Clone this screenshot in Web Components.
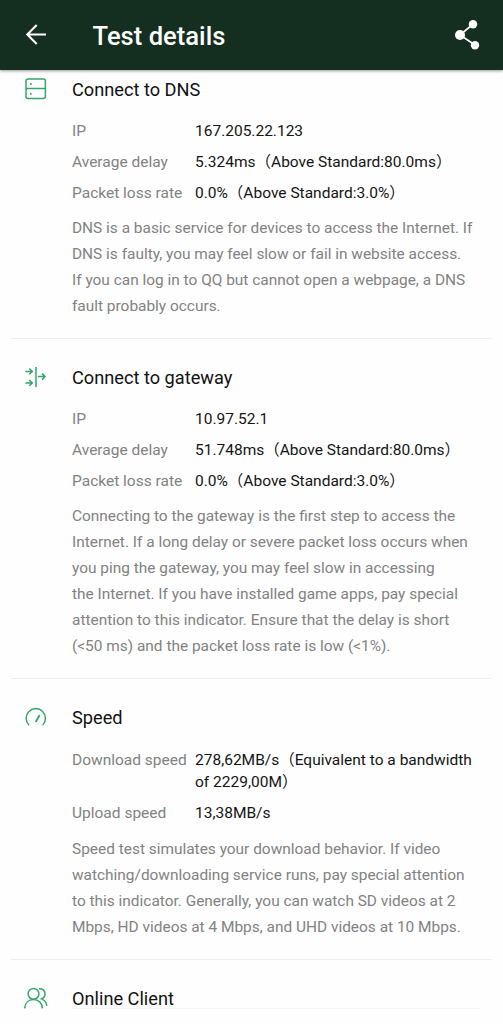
<!DOCTYPE html>
<html lang="en">
<head>
<meta charset="utf-8">
<title>Test details</title>
<style>
html,body{margin:0;height:100%;overflow:hidden;background:#fefefe}
body{font-family:Roboto,"Noto Sans CJK SC",sans-serif}
</style>
</head>
<body>
<test-page>
  <app-header slot="header">Test details</app-header>
  <detail-section icon="dns" heading="Connect to DNS" style="--top:9px">
    <detail-row slot="rows" label="IP">167.205.22.123</detail-row>
    <detail-row slot="rows" label="Average delay">5.324ms（Above Standard:80.0ms）</detail-row>
    <detail-row slot="rows" label="Packet loss rate">0.0%（Above Standard:3.0%）</detail-row>
    DNS is a basic service for devices to access the Internet. If<br>DNS is faulty, you may feel slow or fail in website access.<br>If you can log in to QQ but cannot open a webpage, a DNS<br>fault probably occurs.
  </detail-section>
  <detail-section icon="gateway" heading="Connect to gateway">
    <detail-row slot="rows" label="IP">10.97.52.1</detail-row>
    <detail-row slot="rows" label="Average delay">51.748ms（Above Standard:80.0ms）</detail-row>
    <detail-row slot="rows" label="Packet loss rate">0.0%（Above Standard:3.0%）</detail-row>
    Connecting to the gateway is the first step to access the<br>Internet. If a long delay or severe packet loss occurs when<br>you ping the gateway, you may feel slow in accessing<br>the Internet. If you have installed game apps, pay special<br>attention to this indicator. Ensure that the delay is short<br>(&lt;50 ms) and the packet loss rate is low (&lt;1%).
  </detail-section>
  <detail-section icon="speed" heading="Speed" style="--rows:20px;--note:12px">
    <detail-row slot="rows" label="Download speed">278,62MB/s（Equivalent to a bandwidth<br>of 2229,00M）</detail-row>
    <detail-row slot="rows" label="Upload speed">13,38MB/s</detail-row>
    Speed test simulates your download behavior. If video<br>watching/downloading service runs, pay special attention<br>to this indicator. Generally, you can watch SD videos at 2<br>Mbps, HD videos at 4 Mbps, and UHD videos at 10 Mbps.
  </detail-section>
  <detail-section icon="clients" heading="Online Client" last></detail-section>
</test-page>
<script>
const ICONS = {
  dns: '<rect x="2" y="2" width="19.4" height="19.4" rx="2"/><path d="M2 11.5h19.4"/><path d="M5.9 6.8h1.8M5.9 16.9h1.8" stroke-width="1.8"/>',
  gateway: '<path d="M12 2v20M1.4 6.4h7M5.3 3.5l3 2.9-3 2.9M1.4 17.9h7M5.3 15l3 2.9-3 2.9M14 11.6h7M18 8.6l3 3-3 3"/>',
  speed: '<path d="M5 20.2A9.7 9.7 0 1 1 18.6 20.2"/><path d="M15.7 10l-4 7" stroke-width="1.8"/>',
  clients: '<circle cx="9.5" cy="7.8" r="5.4"/><path d="M.7 22.4C.9 17 4.4 13.5 9.5 13.5s8.7 3.5 8.9 8.9M15 2.7c4 0 6 2.3 6 5.2 0 2.6-1.3 4.1-3.5 5 3 1.1 4.8 3.7 5.3 7.1"/>'
};

class TestPage extends HTMLElement {
  constructor() {
    super();
    this.attachShadow({mode: 'open'}).innerHTML = `
      <style>
        :host{display:flex;flex-direction:column;height:1024px;overflow:hidden}
        main{flex:1;min-height:0;overflow:hidden}
      </style>
      <slot name="header"></slot><main><slot></slot></main>`;
  }
}

class AppHeader extends HTMLElement {
  constructor() {
    super();
    this.attachShadow({mode: 'open'}).innerHTML = `
      <style>
        :host{display:flex;align-items:center;box-sizing:border-box;height:70px;flex:none;padding:0 20px 0 24px;
          background:#142e20;color:#fff;box-shadow:0 1px 3px rgba(0,0,0,.4);position:relative}
        h1{margin:2px 0 0 44.5px;flex:1;font-size:25.6px;font-weight:500;line-height:30px;white-space:nowrap}
        svg{display:block;flex:none}
      </style>
      <svg width="24" height="24" viewBox="0 0 24 24" fill="none" stroke="#fff" stroke-width="2.1"><path d="M22 11.5H3.3M12.7 2.1L3.3 11.5l9.4 9.4"/></svg>
      <h1><slot></slot></h1>
      <svg width="28" height="32" viewBox="0 0 28 32"><path d="M18 5.2L5 16l15 10" fill="none" stroke="#fff" stroke-width="1.7"/><g fill="#fff"><circle cx="18" cy="5.2" r="4.2"/><circle cx="5" cy="16" r="5"/><circle cx="20" cy="26.2" r="4.2"/></g></svg>`;
  }
}

class DetailRow extends HTMLElement {
  constructor() {
    super();
    this.attachShadow({mode: 'open'}).innerHTML = `
      <style>
        :host{display:grid;grid-template-columns:123px auto;line-height:22px;font-size:15.5px;white-space:nowrap;color:#141414}
        .label{color:#828282}
      </style>
      <span class="label"></span><span><slot></slot></span>`;
  }
  connectedCallback() {
    this.shadowRoot.querySelector('.label').textContent = this.getAttribute('label');
  }
}

class DetailSection extends HTMLElement {
  constructor() {
    super();
    this.attachShadow({mode: 'open'}).innerHTML = `
      <style>
        :host{display:block;margin:0 11px;padding:var(--top,28px) 0 19px;border-bottom:1px solid #efefef}
        :host([last]){margin-right:23px;padding-bottom:0;border:0}
        .body{display:grid;grid-template-columns:61px 1fr}
        svg{display:block;margin:-2px 0 0 13px;fill:none;stroke:#36a56c;stroke-width:1.5}
        h2{margin:0;font-size:18.2px;font-weight:400;line-height:22px;color:#111;white-space:nowrap}
        .rows{display:grid;gap:9px;margin-top:var(--rows,19px)}
        p{margin:var(--note,11px) 0 0;font-size:15.43px;line-height:26px;color:#828282;white-space:nowrap}
        :host([last]) .rows,:host([last]) p{display:none}
        :host([last]) h2{height:20px;border-bottom:1px solid #f4f4f4}
      </style>
      <div class="body">
        <svg width="24" height="24" viewBox="0 0 24 24"></svg>
        <div><h2></h2><div class="rows"><slot name="rows"></slot></div><p><slot></slot></p></div>
      </div>`;
  }
  connectedCallback() {
    this.shadowRoot.querySelector('h2').textContent = this.getAttribute('heading');
    this.shadowRoot.querySelector('svg').innerHTML = ICONS[this.getAttribute('icon')];
  }
}

customElements.define('test-page', TestPage);
customElements.define('app-header', AppHeader);
customElements.define('detail-row', DetailRow);
customElements.define('detail-section', DetailSection);
</script>
</body>
</html>
